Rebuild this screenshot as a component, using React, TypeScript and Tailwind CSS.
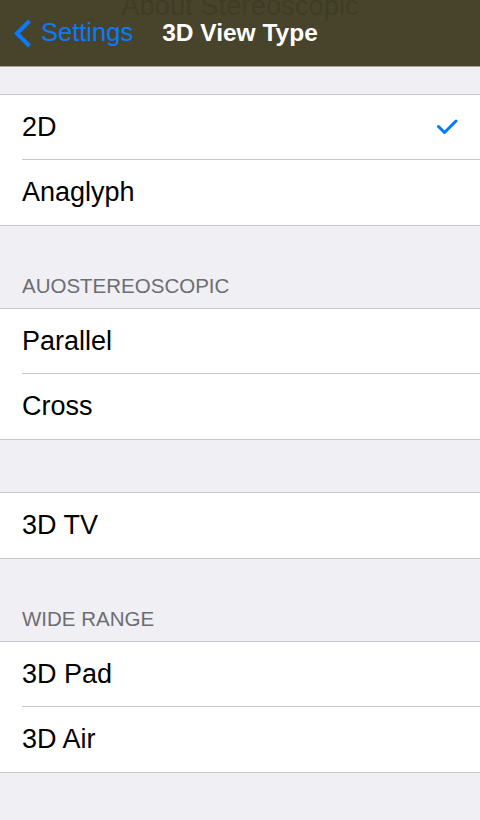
import React from "react";

const font = { fontFamily: '"Liberation Sans", Arial, sans-serif' };

function Row({ label, last, checked }: { label: string; last?: boolean; checked?: boolean }) {
  return (
    <div className="pl-[22px] bg-white">
      <div
        className={
          "h-[65px] flex items-center justify-between pr-[22px] " +
          (last ? "" : "border-b border-[#c8c7cc]")
        }
      >
        <span className="text-[27px] text-black leading-none">{label}</span>
        {checked && (
          <svg width="22" height="18" viewBox="0 0 22 18" className="mr-[-1px]">
            <path d="M1.5 8.5 L7.5 14.5 L19 3" fill="none" stroke="#007aff" strokeWidth="3" strokeLinecap="round" strokeLinejoin="round" />
          </svg>
        )}
      </div>
    </div>
  );
}

function Group({ items }: { items: { label: string; checked?: boolean }[] }) {
  return (
    <div className="border-t border-b border-[#c8c7cc] bg-white">
      {items.map((it, i) => (
        <Row key={it.label} label={it.label} checked={it.checked} last={i === items.length - 1} />
      ))}
    </div>
  );
}

function Header({ text }: { text: string }) {
  return (
    <div className="h-[82px] flex items-end pl-[22px] pb-[12px]">
      <span className="text-[20.5px] text-[#6d6d72] leading-none">{text}</span>
    </div>
  );
}

export default function App() {
  return (
    <div className="w-[480px] h-[820px] bg-[#efeff4] overflow-hidden" style={font}>
      <div className="relative h-[66px] bg-[#47442b] border-b border-[#a3a3a6] box-content">
        <div className="absolute left-0 right-0 top-[-8px] text-center text-[27.4px] text-[#3f3c26] leading-none whitespace-nowrap">
          About Stereoscopic
        </div>
        <div className="absolute left-[13px] top-0 h-[66px] flex items-center">
          <svg width="20" height="32" viewBox="0 0 20 32" className="mt-[1px]">
            <path d="M16.5 3 L4 15.5 L16.5 28" fill="none" stroke="#0a7aff" strokeWidth="4" strokeLinecap="butt" strokeLinejoin="miter" />
          </svg>
          <span className="ml-[8px] text-[25.5px] text-[#0a7aff] leading-none">Settings</span>
        </div>
        <div className="h-[66px] flex items-center justify-center">
          <span className="text-[24.5px] font-bold text-white leading-none">3D View Type</span>
        </div>
      </div>
      <div className="h-[27px]" />
      <Group items={[{ label: "2D", checked: true }, { label: "Anaglyph" }]} />
      <Header text="AUOSTEREOSCOPIC" />
      <Group items={[{ label: "Parallel" }, { label: "Cross" }]} />
      <div className="h-[52px]" />
      <Group items={[{ label: "3D TV" }]} />
      <Header text="WIDE RANGE" />
      <Group items={[{ label: "3D Pad" }, { label: "3D Air" }]} />
    </div>
  );
}
